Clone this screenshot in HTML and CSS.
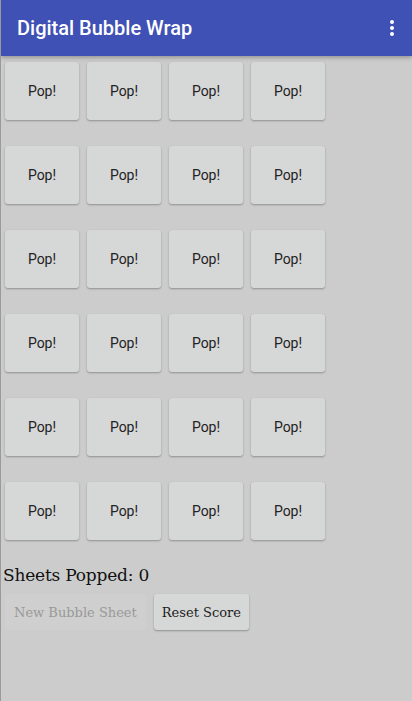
FILE: index.html
```html
<!DOCTYPE html>
<html lang="en">
<head>
    <meta charset="UTF-8">
    <meta name="viewport" content="width=device-width, initial-scale=1.0">
    <title>Digital Bubble Wrap</title>
    <link rel="stylesheet" href="styles.css">
</head>
<body>
    <header class="app-bar">
        <h1>Digital Bubble Wrap</h1>
        <button class="menu-btn" aria-label="More options">
            <svg width="6" height="18" viewBox="0 0 6 18">
                <circle cx="3" cy="3" r="2" fill="#fff"/>
                <circle cx="3" cy="9" r="2" fill="#fff"/>
                <circle cx="3" cy="15" r="2" fill="#fff"/>
            </svg>
        </button>
    </header>

    <main class="content">
        <div id="sheet" class="sheet"></div>

        <p class="score">Sheets Popped: <span id="score">0</span></p>

        <div class="actions">
            <button class="action" disabled>New Bubble Sheet</button>
            <button class="action" onclick="resetScore()">Reset Score</button>
        </div>
    </main>

    <script>
        // Build a 6 x 4 sheet of bubbles
        const sheet = document.getElementById('sheet');
        for (let r = 0; r < 6; r++) {
            const row = document.createElement('div');
            row.className = 'bubble-row';
            for (let c = 0; c < 4; c++) {
                const b = document.createElement('button');
                b.className = 'bubble';
                b.textContent = 'Pop!';
                row.appendChild(b);
            }
            sheet.appendChild(row);
        }

        function resetScore() {
            document.getElementById('score').textContent = '0';
        }
    </script>
</body>
</html>
```

FILE: styles.css
```css
html, body {
    height: 100%;
}
body {
    margin: 0;
    background-color: #cccccc;
    font-family: "DejaVu Serif", serif;
    border-left: 1px solid #9a9a9a;
    box-sizing: border-box;
}
.app-bar {
    height: 56px;
    background-color: #3f51b5;
    display: flex;
    align-items: center;
    justify-content: space-between;
    padding: 0 17px 0 16px;
    box-shadow: 0 2px 4px rgba(0, 0, 0, 0.25);
}
.app-bar h1 {
    margin: 0;
    color: #fff;
    font-family: Roboto, sans-serif;
    font-size: 20px;
    font-weight: 500;
}
.menu-btn {
    background: none;
    border: none;
    padding: 0;
    display: flex;
    cursor: pointer;
}
.content {
    padding: 6px 4px 0 4px;
}
.sheet {
    display: flex;
    flex-direction: column;
    gap: 26px;
}
.bubble-row {
    display: flex;
    gap: 8px;
}
.bubble {
    width: 74px;
    height: 58px;
    background-color: #d6d7d7;
    border: none;
    border-radius: 3px;
    box-shadow: 0 1px 2px rgba(0, 0, 0, 0.3);
    font-family: Roboto, sans-serif;
    font-size: 14px;
    color: #222;
    cursor: pointer;
}
.score {
    margin: 25px 0 0 -2px;
    font-size: 17px;
    letter-spacing: -0.2px;
    color: #111;
}
.actions {
    display: flex;
    gap: 8px;
    margin-top: 9px;
}
.action {
    height: 36px;
    padding: 0 8px;
    background-color: #d6d7d7;
    border: none;
    border-radius: 3px;
    box-shadow: 0 1px 2px rgba(0, 0, 0, 0.3);
    font-family: "DejaVu Serif", serif;
    font-size: 13px;
    color: #222;
    cursor: pointer;
}
.action:disabled {
    padding: 0 9px;
    background-color: #cfcfcf;
    color: #999;
    box-shadow: none;
    cursor: default;
}
```
